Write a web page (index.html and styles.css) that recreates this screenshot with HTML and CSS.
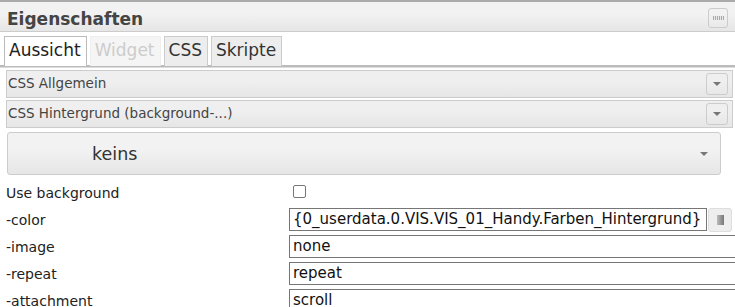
FILE: index.html
```
<!DOCTYPE html>
<html>
<head>
  <link rel="stylesheet" href="styles.css">
</head>
<body>
  <div class="head">
    <span class="title">Eigenschaften</span>
    <span class="hbtn"><span class="grip"></span></span>
  </div>
  <div class="tabs">
    <span class="tab active">Aussicht</span>
    <span class="tab disabled">Widget</span>
    <span class="tab">CSS</span>
    <span class="tab">Skripte</span>
  </div>
  <div class="content">
    <div class="acc">CSS Allgemein<span class="arr"><span class="tri"></span></span></div>
    <div class="acc">CSS Hintergrund (background-...)<span class="arr"><span class="tri"></span></span></div>
    <div class="sel"><span class="seltext">keins</span><span class="tri"></span></div>
    <div class="rows">
      <div class="row"><span class="lbl">Use background</span><span class="val"><span class="chk"></span></span></div>
      <div class="row"><span class="lbl">-color</span><span class="val"><span class="inp short">{0_userdata.0.VIS.VIS_01_Handy.Farben_Hintergrund}</span><span class="cbtn"><span class="sq"></span></span></span></div>
      <div class="row"><span class="lbl">-image</span><span class="val"><span class="inp">none</span></span></div>
      <div class="row"><span class="lbl">-repeat</span><span class="val"><span class="inp">repeat</span></span></div>
      <div class="row"><span class="lbl">-attachment</span><span class="val"><span class="inp">scroll</span></span></div>
    </div>
  </div>
</body>
</html>
```
FILE: styles.css
```
body{margin:0;font-family:"DejaVu Sans",Verdana,sans-serif;background:#fff;overflow:hidden;width:735px;height:307px;}
.head{border-top:2px solid #aaa;height:29px;border-bottom:1px solid #ccc;background:linear-gradient(#f2f2f2 40%,#e6e6e6);display:flex;align-items:center;justify-content:space-between;padding:0 7px 0 7px;}
.title{font-weight:bold;font-size:17px;color:#444;padding-top:5px;}
.hbtn{width:18px;height:18px;border:1px solid #ccc;border-radius:3px;display:flex;align-items:center;justify-content:center;margin-top:2px;}
.grip{width:11px;height:4px;background:repeating-linear-gradient(90deg,#aaa 0 1px,#e8e8e8 1px 2px);}
.tabs{display:flex;gap:3px;padding:4px 0 0 4px;border-bottom:2px solid #bbb;height:29px;}
.tab{font-size:17px;color:#333;border:1px solid #ccc;border-bottom:none;background:#ededed;padding:3px 5px 0 4px;height:26px;}
.tab.active{background:#fff;color:#222;border-color:#bbb;}
.tab.disabled{color:#ccc;background:#f5f5f5;border-color:#eee;}
.content{padding:2px 2px 0 6px;border-top:1px solid #ddd;}
.acc{position:relative;font-size:13.5px;color:#444;background:linear-gradient(#efefef 40%,#e6e6e6);border:1px solid #ccc;height:28px;padding:4px 0 0 1px;box-sizing:border-box;margin-bottom:2px;}
.arr{position:absolute;right:4px;top:2px;width:20px;height:20px;border:1px solid #ccc;border-radius:3px;display:flex;align-items:center;justify-content:center;}
.tri{width:0;height:0;border-left:4px solid transparent;border-right:4px solid transparent;border-top:4px solid #777;}
.sel{margin:4px 12px 0 1px;height:43px;border:1px solid #ccc;border-radius:3px;background:linear-gradient(#f2f2f2 40%,#e6e6e6);display:flex;align-items:center;justify-content:space-between;padding:0 12px 0 84px;box-sizing:border-box;}
.seltext{font-size:17.5px;color:#333;}
.rows{margin-top:4px;}
.row{display:flex;align-items:center;height:27px;}
.lbl{width:283px;font-size:14px;color:#222;flex:none;}
.val{display:flex;align-items:center;flex:1;min-width:0;}
.chk{width:11px;height:11px;border:1px solid #777;border-radius:2px;margin-left:4px;margin-top:-2px;}
.inp{flex:1;font-size:15px;color:#111;border:1px solid #767676;height:23px;line-height:21px;padding:0 3px;box-sizing:border-box;white-space:nowrap;overflow:hidden;margin-right:-4px;}
.inp.short{flex:none;width:418px;margin-right:1px;}
.cbtn{width:22px;height:22px;border:1px solid #ddd;border-radius:3px;background:#eee;display:flex;align-items:center;justify-content:center;}
.sq{width:7px;height:10px;background:linear-gradient(90deg,#bbb,#777);}
```
